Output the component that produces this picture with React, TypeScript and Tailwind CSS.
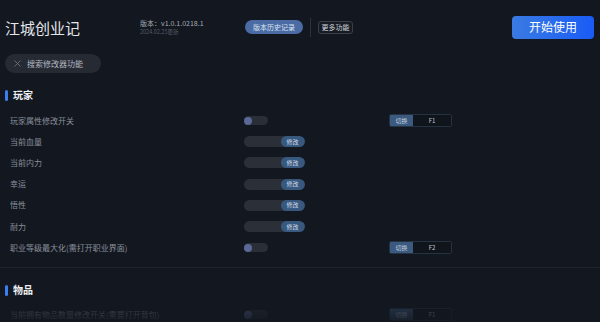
import React from "react";

type Row = { label: string; kind: "toggle" | "input"; hotkey?: string };

const playerRows: Row[] = [
  { label: "玩家属性修改开关", kind: "toggle", hotkey: "F1" },
  { label: "当前血量", kind: "input" },
  { label: "当前内力", kind: "input" },
  { label: "幸运", kind: "input" },
  { label: "悟性", kind: "input" },
  { label: "耐力", kind: "input" },
  { label: "职业等级最大化(需打开职业界面)", kind: "toggle", hotkey: "F2" },
];

const itemRows: Row[] = [
  { label: "当前拥有物品数量修改开关(需要打开背包)", kind: "toggle", hotkey: "F1" },
];

function Toggle() {
  return (
    <div className="flex h-[9px] w-[24px] items-center rounded-full bg-[#2a2e36]">
      <div className="h-[8px] w-[8px] rounded-full bg-[#5a6898]" />
    </div>
  );
}

function ModifyInput() {
  return (
    <div className="flex h-[11px] w-[61px] overflow-hidden rounded-full bg-[#2b2f37]">
      <div className="flex-1" />
      <div className="flex w-[24px] items-center justify-center rounded-full bg-[#37587f] text-[6px] leading-none text-[#d3dbe8]">
        修改
      </div>
    </div>
  );
}

function Hotkey({ k }: { k: string }) {
  return (
    <div className="flex h-[13px] w-[63px] overflow-hidden rounded-[2px] border border-[#263142] text-[6px] leading-none">
      <div className="flex w-[23px] items-center justify-center bg-[#3a5a80] text-[#c8d2df]">
        切换
      </div>
      <div className="flex flex-1 items-center justify-center bg-[#10141b] text-[#c2c8d2]">
        {k}
      </div>
    </div>
  );
}

function SettingRow({ row }: { row: Row }) {
  return (
    <div className="flex h-[21.2px] items-center pl-[10px]">
      <div className="w-[233.5px] text-[8px] leading-none text-[#8a909c]">{row.label}</div>
      <div className="w-[145.5px]">{row.kind === "toggle" ? <Toggle /> : <ModifyInput />}</div>
      {row.hotkey && <Hotkey k={row.hotkey} />}
    </div>
  );
}

function SectionTitle({ title }: { title: string }) {
  return (
    <div className="flex h-[12px] items-center pl-[5px]">
      <div className="h-[11px] w-[3px] rounded-full bg-[#3b7ff0]" />
      <div className="ml-[5px] text-[10px] font-bold leading-none text-[#eef0f3]">{title}</div>
    </div>
  );
}

export default function App() {
  return (
    <div className="relative h-[322px] w-[600px] overflow-hidden bg-[#13171f] font-['Noto_Sans_CJK_SC','Noto_Sans',sans-serif]">
      {/* header */}
      <div className="flex h-[54px] items-center">
        <div className="w-[140px] pl-[5px] text-[15px] leading-none text-[#e3e6eb]">江城创业记</div>
        <div className="flex w-[105px] flex-col pt-[1px]">
          <div className="text-[7px] leading-none text-[#a7adb8]">版本：v1.0.1.0218.1</div>
          <div className="mt-[3px] text-[5.5px] leading-none text-[#565d6a]">2024.02.25更新</div>
        </div>
        <div className="flex h-[14px] w-[58px] items-center justify-center rounded-full bg-[#4a6ba3] text-[7px] leading-none text-[#dde5f3]">
          版本历史记录
        </div>
        <div className="ml-[7px] h-[19px] w-px bg-[#2c313a]" />
        <div className="ml-[7px] flex h-[13px] w-[35px] items-center justify-center rounded-[3px] border border-[#3a404b] bg-[#161a22] text-[7px] leading-none text-[#d2d6dd]">
          更多功能
        </div>
        <div className="ml-auto mr-[6px] flex h-[23px] w-[82px] items-center justify-center rounded-[4px] bg-linear-to-r from-[#3a7ae2] to-[#1a5bf6] text-[12px] leading-none text-white">
          开始使用
        </div>
      </div>

      {/* search */}
      <div className="ml-[5px] flex h-[19px] w-[96px] items-center rounded-full bg-[#252a33]">
        <svg className="ml-[9px]" width="7" height="7" viewBox="0 0 7 7" fill="none">
          <path d="M0.5 0.5L6.5 6.5M6.5 0.5L0.5 6.5" stroke="#6b717d" strokeWidth="0.9" />
        </svg>
        <div className="ml-[6px] text-[8px] leading-none text-[#b4b9c2]">搜索修改器功能</div>
      </div>

      <div className="mt-[16px]">
        <SectionTitle title="玩家" />
      </div>
      <div className="mt-[9px]">
        {playerRows.map((r) => (
          <SettingRow key={r.label} row={r} />
        ))}
      </div>

      <div className="mt-[9px] h-px w-full bg-[#1d222b]" />

      <div className="mt-[16px]">
        <SectionTitle title="物品" />
      </div>
      <div className="mt-[8px]">
        {itemRows.map((r) => (
          <SettingRow key={r.label} row={r} />
        ))}
      </div>

      <div className="pointer-events-none absolute bottom-0 left-0 h-[26px] w-full bg-linear-to-b from-[#13171f]/40 to-[#13171f]/90" />
    </div>
  );
}
